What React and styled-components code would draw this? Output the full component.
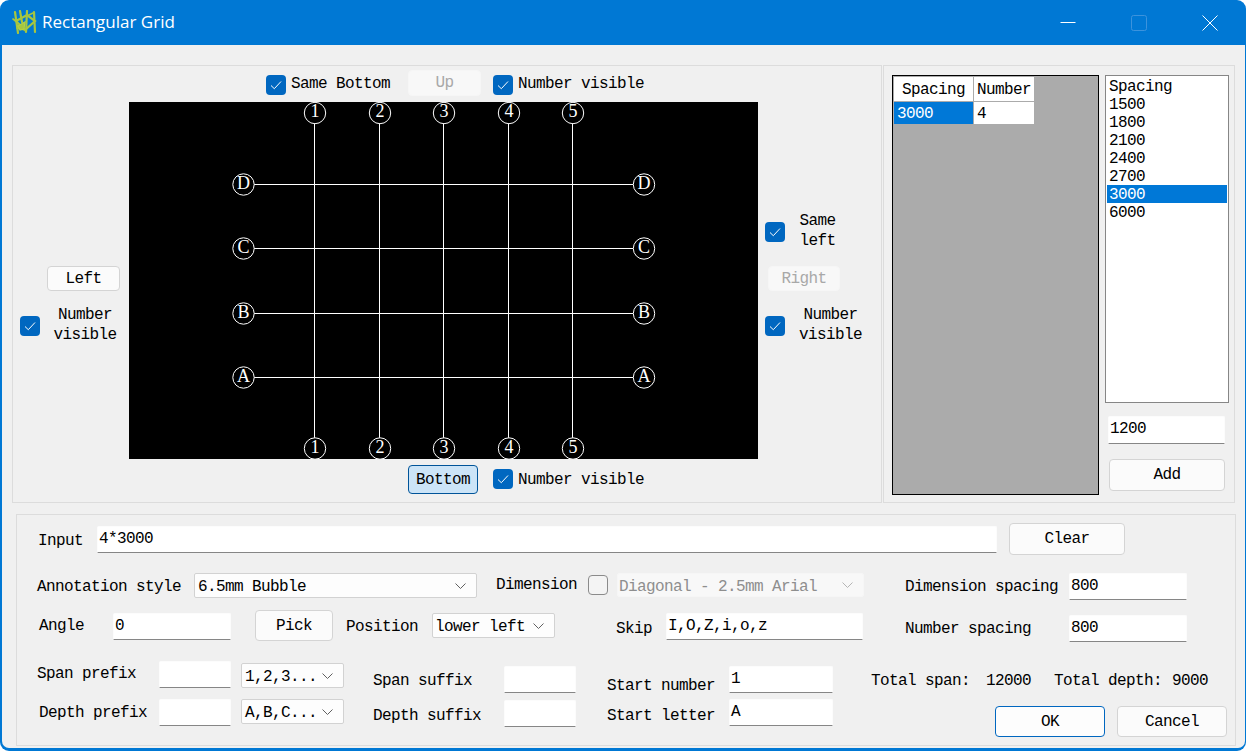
import React from 'react';
import styled, { createGlobalStyle, css } from 'styled-components';

const Global = createGlobalStyle`
  html, body { margin: 0; padding: 0; background: #fff; }
  #root { width: 1246px; height: 751px; overflow: hidden; }
  * { box-sizing: border-box; }
`;

const place = css`
  flex: none;
  margin-left: ${p => p.$ml || 0}px;
  margin-top: ${p => p.$mt || 0}px;
`;

const Win = styled.div`
  width: 1246px; height: 751px;
  background: #0078d4;
  border-radius: 9px;
  display: flex; flex-direction: column;
  font: 16px/20px "Liberation Mono", monospace;
  letter-spacing: -0.6px;
  color: #000;
  overflow: hidden;
`;
const TitleBar = styled.div`
  height: 45px; flex: none;
  display: flex; align-items: center;
  padding-left: 12px;
  color: #fff;
  letter-spacing: 0;
`;
const TitleText = styled.div`
  font: 17px/24px "Open Sans", sans-serif;
  margin-left: 5px;
  margin-top: -1px;
`;
const WinButtons = styled.div`
  margin-left: auto;
  padding-right: 1px;
  display: flex;
`;
const WinBtn = styled.div`
  width: 71px; height: 45px;
  display: flex; align-items: center; justify-content: center;
`;
const Body = styled.div`
  flex: none;
  width: 1243px; height: 703px;
  margin-left: 2px;
  background: #f0f0f0;
  border-radius: 0 0 7px 7px;
  padding: 20px 0 0 10px;
`;
const Top = styled.div`
  display: flex; gap: 1px; height: 438px;
`;
const Frame = styled.div`
  border: 1px solid #dcdcdc;
`;
const PreviewFrame = styled(Frame)`
  width: 870px;
  display: grid;
  grid-template-columns: 116px 629px 123px;
  grid-template-rows: 36px 357px 43px;
`;
const TopBar = styled.div`
  grid-column: 1 / 4;
  display: flex; align-items: flex-start;
  padding-left: 253px;
`;
const BottomBar = styled(TopBar)``;
const SideCol = styled.div`
  display: flex; flex-direction: column; align-items: flex-start;
`;
const Canvas = styled.svg`
  display: block;
  background: #000;
  width: 629px; height: 357px;
`;
const CheckRow = styled.div`
  ${place}
  display: flex; align-items: center;
`;
const CheckBox = styled.div`
  ${place}
  width: 20px; height: 20px; border-radius: 4px;
  background: ${p => p.$on ? '#0067c0' : '#f4f4f4'};
  border: ${p => p.$on ? 'none' : '1.5px solid #8b8b8b'};
  display: flex; align-items: center; justify-content: center;
`;
const Label = styled.div`
  ${place}
  width: ${p => p.$w ? p.$w + 'px' : 'auto'};
  height: 20px;
  line-height: 24px;
  white-space: pre;
`;
const Stacked = styled.div`
  ${place}
  width: ${p => p.$w}px;
  text-align: center;
  white-space: pre-line;
`;
const Btn = styled.div`
  ${place}
  width: ${p => p.$w}px; height: ${p => p.$h}px;
  border-radius: 4px;
  display: flex; align-items: center; justify-content: center;
  background: #fbfbfb;
  border: 1px solid #d4d4d4;
  ${p => p.$variant === 'disabled' && css`
    background: #f8f8f8; border-color: #f6f6f6; color: #a8a8a8;
  `}
  ${p => p.$variant === 'pressed' && css`
    background: #cce4f7; border-color: #005499;
  `}
  ${p => p.$variant === 'default' && css`
    background: #fdfdfd; border-color: #0067c0;
  `}
`;
const SpacingFrame = styled(Frame)`
  width: 352px;
  display: flex;
  padding: 9px 0 0 8px;
`;
const GridView = styled.div`
  width: 207px; height: 420px;
  background: #ababab;
  border: 1px solid #000;
  padding: 1px;
`;
const GridTable = styled.div`
  display: grid;
  grid-template-columns: 79px 60px;
  grid-template-rows: 24px 22px;
  column-gap: 1px; row-gap: 1px;
  width: 140px;
`;
const GridHead = styled.div`
  background: #fff;
  text-align: center;
  line-height: 27px;
  height: 24px;
`;
const GridCell = styled.div`
  background: ${p => p.$sel ? '#0078d7' : '#fff'};
  color: ${p => p.$sel ? '#fff' : '#000'};
  padding-left: 3px;
  line-height: 25px;
  height: 22px;
`;
const SideStack = styled.div`
  margin-left: 6px;
  display: flex; flex-direction: column; align-items: flex-start;
`;
const ListBox = styled.div`
  width: 124px; height: 328px;
  background: #fff;
  border: 1px solid #868686;
  padding: 1px;
`;
const ListItem = styled.div`
  height: 18px; line-height: 21px;
  padding-left: 2px;
  background: ${p => p.$sel ? '#0078d7' : 'transparent'};
  color: ${p => p.$sel ? '#fff' : '#000'};
`;
const Field = styled.div`
  ${place}
  width: ${p => p.$w}px; height: ${p => p.$h || 27}px;
  background: #fff;
  border: 1px solid #fcfcfc;
  border-bottom: 1px solid #868686;
  border-radius: 2px 2px 0 0;
  padding-left: 1px;
  line-height: 24px;
  white-space: pre;
`;
const Select = styled.div`
  ${place}
  width: ${p => p.$w}px; height: ${p => p.$h || 25}px;
  background: ${p => p.$off ? '#f8f8f8' : '#fdfdfd'};
  color: ${p => p.$off ? '#8e8e8e' : '#000'};
  border: 1px solid ${p => p.$off ? '#f6f6f6' : '#d2d2d2'};
  border-radius: 2px;
  padding: 0 10px 0 ${p => p.$pl ?? 3}px;
  display: flex; align-items: center; justify-content: space-between;
  white-space: pre;
`;
const SelectText = styled.span`
  margin-top: 3px;
`;
const ChevronMark = styled.svg`
  margin-top: 1px;
  flex: none;
`;
const FormFrame = styled(Frame)`
  width: 1220px; height: 232px;
  margin: 11px 0 0 4px;
  padding-top: 8px;
`;
const Row = styled.div`
  display: flex; align-items: flex-start;
  height: ${p => p.$h}px;
`;

const Check = () => (
  <svg width="12" height="10" viewBox="0 0 12 10" fill="none" stroke="#fff" strokeWidth="1">
    <polyline points="1,5.5 4.3,8.7 11,1.5" />
  </svg>
);
const Tick = ({ on = true, ml, mt }) => <CheckBox $on={on} $ml={ml} $mt={mt}>{on && <Check />}</CheckBox>;

const Drop = ({ children, off, ...rest }) => (
  <Select $off={off} {...rest}>
    <SelectText>{children}</SelectText>
    <ChevronMark width="11" height="7" viewBox="0 0 11 7" fill="none" stroke={off ? '#b5b5b5' : '#606060'} strokeWidth="1">
      <polyline points="0.5,0.5 5.5,5.5 10.5,0.5" />
    </ChevronMark>
  </Select>
);

const Logo = () => (
  <svg width="25" height="25" viewBox="0 0 25 25" fill="none" stroke="#a6c640" strokeWidth="2.2" strokeLinecap="round">
    <path d="M3 2 L6 23 M8 1 L10 12 M15 1 L14 22 M22 2 L23 22" />
    <path d="M4 11 L15 5 L23 11 L13 20 Z" />
    <path d="M1 9 L5 12 M21 3 L15 6 M5 18 L13 20" strokeWidth="1.6" />
    <path d="M6 16 L13 12 L12 19 L8 20 Z" fill="#a6c640" stroke="#b4d045" strokeWidth="1.2" />
  </svg>
);

const vX = [185.5, 250.5, 314.5, 379.5, 443.5];
const hY = [82.5, 146.5, 211.5, 275.5];
const nums = ['1', '2', '3', '4', '5'];
const lets = ['D', 'C', 'B', 'A'];

const Bubble = ({ x, y, t }) => (
  <g>
    <circle cx={x} cy={y} r="10.7" stroke="#fff" strokeWidth="1" fill="#000" />
    <text x={x} y={y + 4} textAnchor="middle" fill="#fff" fontFamily='"Liberation Serif", serif' fontSize="18" letterSpacing="0">{t}</text>
  </g>
);

const Preview = () => (
  <Canvas viewBox="0 0 629 357">
    <g stroke="#fff" strokeWidth="1">
      {vX.map(x => <line key={x} x1={x} x2={x} y1="22" y2="336" />)}
      {hY.map(y => <line key={y} x1="125" x2="504" y1={y} y2={y} />)}
    </g>
    {vX.map((x, i) => <Bubble key={'t' + i} x={x + 0.5} y={11} t={nums[i]} />)}
    {vX.map((x, i) => <Bubble key={'b' + i} x={x + 0.5} y={346.5} t={nums[i]} />)}
    {hY.map((y, i) => <Bubble key={'l' + i} x={114.5} y={y} t={lets[i]} />)}
    {hY.map((y, i) => <Bubble key={'r' + i} x={515} y={y} t={lets[i]} />)}
  </Canvas>
);

export default function App() {
  return (
    <Win>
      <Global />
      <TitleBar>
        <Logo />
        <TitleText>Rectangular Grid</TitleText>
        <WinButtons>
          <WinBtn>
            <svg width="16" height="16" viewBox="0 0 16 16" stroke="#fff" strokeWidth="1"><line x1="0.5" x2="15.5" y1="7.5" y2="7.5" /></svg>
          </WinBtn>
          <WinBtn>
            <svg width="16" height="16" viewBox="0 0 16 16" fill="none" stroke="#3c93dd" strokeWidth="1"><rect x="0.5" y="0.5" width="15" height="15" rx="2" /></svg>
          </WinBtn>
          <WinBtn>
            <svg width="16" height="16" viewBox="0 0 16 16" fill="none" stroke="#fff" strokeWidth="1"><path d="M0.5 0.5 L15.5 15.5 M15.5 0.5 L0.5 15.5" /></svg>
          </WinBtn>
        </WinButtons>
      </TitleBar>
      <Body>
        <Top>
          <PreviewFrame>
            <TopBar>
              <Tick mt={9} />
              <Label $ml={5} $mt={6}>Same Bottom</Label>
              <Btn $ml={18} $mt={4} $w={73} $h={26} $variant="disabled">Up</Btn>
              <Tick ml={12} mt={9} />
              <Label $ml={5} $mt={6}>Number visible</Label>
            </TopBar>
            <SideCol>
              <Btn $ml={34} $mt={164} $w={73} $h={25}>Left</Btn>
              <CheckRow $ml={7} $mt={14}>
                <Tick mt={2} />
                <Stacked $ml={13} $w={64}>{'Number\nvisible'}</Stacked>
              </CheckRow>
            </SideCol>
            <Preview />
            <SideCol>
              <CheckRow $ml={7} $mt={109}>
                <Tick mt={2} />
                <Stacked $ml={10} $w={45}>{'Same\nleft'}</Stacked>
              </CheckRow>
              <Btn $ml={10} $mt={15} $w={72} $h={25} $variant="disabled">Right</Btn>
              <CheckRow $ml={7} $mt={14}>
                <Tick mt={2} />
                <Stacked $ml={14} $w={63}>{'Number\nvisible'}</Stacked>
              </CheckRow>
            </SideCol>
            <BottomBar>
              <Btn $ml={142} $mt={6} $w={70} $h={29} $variant="pressed">Bottom</Btn>
              <Tick ml={15} mt={10} />
              <Label $ml={5} $mt={9}>Number visible</Label>
            </BottomBar>
          </PreviewFrame>
          <SpacingFrame>
            <GridView>
              <GridTable>
                <GridHead>Spacing</GridHead>
                <GridHead>Number</GridHead>
                <GridCell $sel>3000</GridCell>
                <GridCell>4</GridCell>
              </GridTable>
            </GridView>
            <SideStack>
              <ListBox>
                <ListItem>Spacing</ListItem>
                {['1500', '1800', '2100', '2400', '2700', '3000', '6000'].map(v => (
                  <ListItem key={v} $sel={v === '3000'}>{v}</ListItem>
                ))}
              </ListBox>
              <Field $ml={3} $mt={13} $w={117} $h={28}>1200</Field>
              <Btn $ml={4} $mt={15} $w={116} $h={32}>Add</Btn>
            </SideStack>
          </SpacingFrame>
        </Top>
        <FormFrame>
          <Row $h={50}>
            <Label $ml={21} $mt={6} $w={45}>Input</Label>
            <Field $ml={14} $mt={3} $w={900}>4*3000</Field>
            <Btn $ml={12} $w={116} $h={32}>Clear</Btn>
          </Row>
          <Row $h={37}>
            <Label $ml={20} $mt={2} $w={144}>Annotation style</Label>
            <Drop $ml={13} $w={283}>6.5mm Bubble</Drop>
            <Label $ml={19} $w={81}>Dimension</Label>
            <Tick on={false} ml={11} mt={2} />
            <Drop off $ml={9} $w={247} $h={24} $pl={1}>Diagonal - 2.5mm Arial</Drop>
            <Label $ml={41} $mt={2} $w={153}>Dimension spacing</Label>
            <Field $ml={11} $w={118}>800</Field>
          </Row>
          <Row $h={51}>
            <Label $ml={22} $mt={4} $w={45}>Angle</Label>
            <Field $ml={29} $mt={3} $w={118}>0</Field>
            <Btn $ml={24} $w={78} $h={31}>Pick</Btn>
            <Label $ml={13} $mt={5} $w={72}>Position</Label>
            <Drop $ml={14} $mt={3} $w={123} $pl={2}>lower left</Drop>
            <Label $ml={61} $mt={7} $w={36}>Skip</Label>
            <Field $ml={14} $mt={3} $w={197}>I,O,Z,i,o,z</Field>
            <Label $ml={42} $mt={7} $w={126}>Number spacing</Label>
            <Field $ml={38} $mt={5} $w={118}>800</Field>
          </Row>
          <Row $h={38}>
            <Label $ml={20} $mt={1} $w={99}>Span prefix</Label>
            <Field $ml={23} $w={72} />
            <Drop $ml={10} $mt={2} $w={103}>1,2,3...</Drop>
            <Label $ml={29} $mt={8} $w={99}>Span suffix</Label>
            <Field $ml={32} $mt={5} $w={72} />
            <Label $ml={31} $mt={13} $w={108}>Start number</Label>
            <Field $ml={14} $mt={5} $w={104}>1</Field>
            <Label $ml={38} $mt={8} $w={99}>Total span:</Label>
            <Label $ml={16} $mt={8} $w={45}>12000</Label>
            <Label $ml={23} $mt={8} $w={108}>Total depth:</Label>
            <Label $ml={10} $mt={8} $w={36}>9000</Label>
          </Row>
          <Row $h={38}>
            <Label $ml={22} $mt={2} $w={108}>Depth prefix</Label>
            <Field $ml={12} $w={72} />
            <Drop $ml={10} $w={103}>A,B,C...</Drop>
            <Label $ml={29} $mt={5} $w={108}>Depth suffix</Label>
            <Field $ml={23} $mt={1} $w={72} />
            <Label $ml={31} $mt={5} $w={108}>Start letter</Label>
            <Field $ml={14} $w={104}>A</Field>
            <Btn $ml={162} $mt={7} $w={110} $h={31} $variant="default">OK</Btn>
            <Btn $ml={12} $mt={7} $w={110} $h={31}>Cancel</Btn>
          </Row>
        </FormFrame>
      </Body>
    </Win>
  );
}
